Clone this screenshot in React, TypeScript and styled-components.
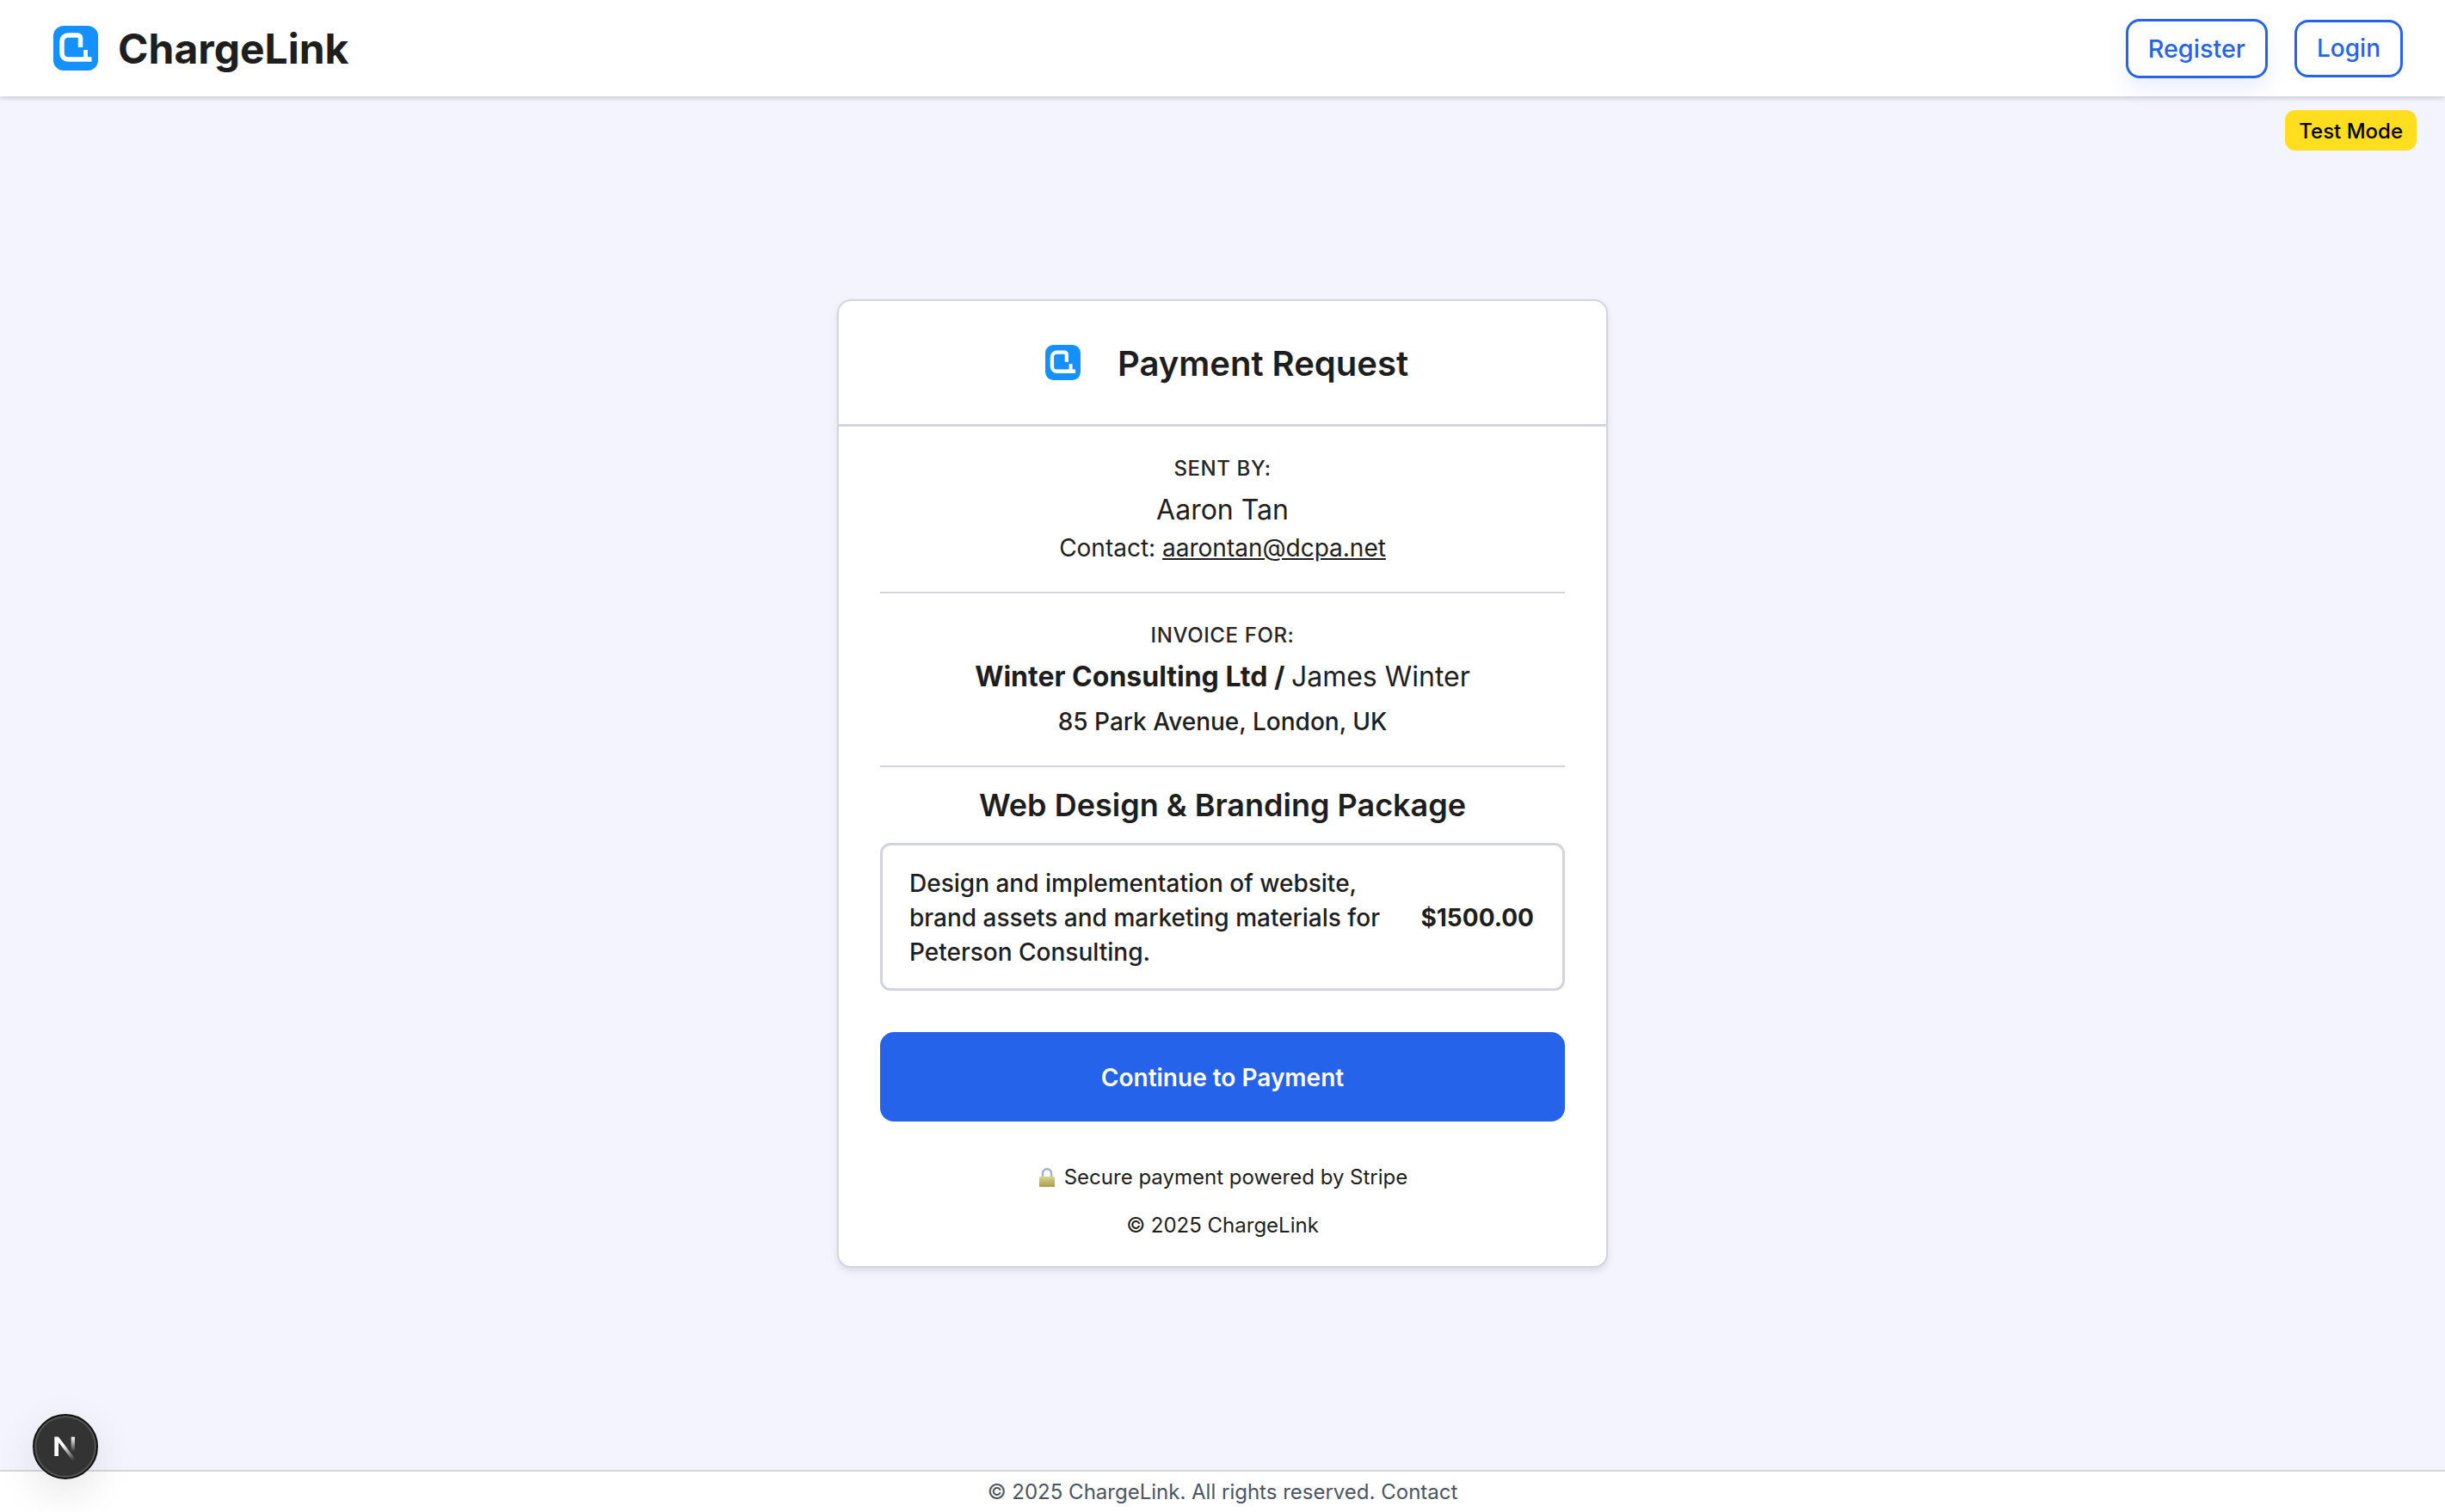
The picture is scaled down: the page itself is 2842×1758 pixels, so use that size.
import React from "react";
import styled, { createGlobalStyle } from "styled-components";

const Global = createGlobalStyle`
  html, body { margin: 0; padding: 0; height: 100%; }
  body { font-family: Inter, "Liberation Sans", sans-serif; color: #171717; background: #f3f4fd; }
  #root { height: 100%; }
  * { box-sizing: border-box; }
`;

const Page = styled.div`
  position: relative;
  height: 1758px;
  display: flex;
  flex-direction: column;
  overflow: hidden;
`;

const Header = styled.header`
  height: 112px;
  flex: none;
  background: #fff;
  display: flex;
  align-items: center;
  justify-content: space-between;
  padding: 0 49px 0 62px;
  box-shadow: 0 2px 6px rgba(0, 0, 0, 0.18);
  position: relative;
`;

const Brand = styled.div`
  display: flex;
  align-items: center;
  gap: 23px;
  font-size: 48px;
  font-weight: 700;
  color: #1e1e1e;
`;

const Nav = styled.nav`
  display: flex;
  align-items: center;
  gap: 31px;
`;

const NavButton = styled.button<{ $hover?: boolean }>`
  font-family: inherit;
  font-size: ${(p) => (p.$hover ? "28.8px" : "28px")};
  font-weight: 500;
  color: #2563eb;
  background: #fff;
  border: 3px solid #2563eb;
  border-radius: 16px;
  height: ${(p) => (p.$hover ? "69px" : "67px")};
  padding: 0 23px;
  ${(p) => p.$hover && "box-shadow: 0 12px 24px rgba(37, 99, 235, 0.1);"}
`;

const TestBadge = styled.div`
  position: absolute;
  top: 128px;
  right: 33px;
  height: 47px;
  padding: 1px 16px 0;
  display: flex;
  align-items: center;
  background: #ffdd1f;
  border-radius: 12px;
  font-size: 24px;
  font-weight: 500;
  color: #000;
`;

const Main = styled.main`
  flex: 1;
  display: flex;
  justify-content: center;
  padding-top: 236px;
`;

const Card = styled.section`
  width: 896px;
  height: 1126px;
  background: #fff;
  border: 2px solid #d4d4dc;
  border-radius: 16px;
  box-shadow: 0 4px 8px rgba(0, 0, 0, 0.1);
  display: flex;
  flex-direction: column;
`;

const CardHead = styled.div`
  height: 146px;
  flex: none;
  display: flex;
  align-items: center;
  justify-content: center;
  gap: 43px;
  padding: 0 0 0 10px;
  border-bottom: 3px solid #d4d4dc;
  font-size: 40px;
  font-weight: 600;
  color: #1e1e1e;
`;

const HeadTitle = styled.span`
  padding-top: 2px;
`;

const CardBody = styled.div`
  padding: 0 48px;
  display: flex;
  flex-direction: column;
  text-align: center;
`;

const Section = styled.div<{ $h: number }>`
  height: ${(p) => p.$h}px;
  padding-top: 31px;
  border-bottom: 2px solid #d4d4dc;
`;

const Label = styled.div`
  font-size: 24px;
  line-height: 36px;
  letter-spacing: 0.6px;
  font-weight: 500;
  color: #262626;
`;

const Name = styled.div`
  font-size: 32px;
  line-height: 48px;
  margin-top: 6px;
  color: #1e1e1e;
`;

const Bold = styled.b`
  font-weight: 700;
`;

const Contact = styled.div`
  font-size: 28px;
  line-height: 40px;
  color: #1e1e1e;
`;

const Mail = styled.a`
  color: inherit;
  text-decoration: underline;
`;

const Address = styled.div`
  font-size: 28px;
  line-height: 40px;
  font-weight: 500;
  margin-top: 8px;
  color: #1e1e1e;
`;

const ItemTitle = styled.h2`
  margin: 20px 0;
  font-size: 36px;
  line-height: 48px;
  font-weight: 600;
  color: #1e1e1e;
`;

const ItemBox = styled.div`
  height: 172px;
  border: 3px solid #d4d4dc;
  border-radius: 12px;
  padding: 2px 33px 0 31px;
  display: flex;
  align-items: center;
  justify-content: space-between;
  text-align: left;
`;

const ItemText = styled.div`
  width: 570px;
  font-size: 28px;
  line-height: 40px;
  font-weight: 500;
  color: #1e1e1e;
`;

const Price = styled.div`
  font-size: 28px;
  font-weight: 700;
  color: #1e1e1e;
`;

const PayButton = styled.button`
  margin-top: 48px;
  height: 104px;
  width: 100%;
  padding: 2px 0 0;
  border: 0;
  border-radius: 16px;
  background: #2563eb;
  color: #fff;
  font-family: inherit;
  font-size: 28px;
  font-weight: 600;
`;

const Secure = styled.div`
  margin-top: 49px;
  padding-left: 2px;
  font-size: 24px;
  line-height: 32px;
  color: #1e1e1e;
  display: flex;
  align-items: center;
  justify-content: center;
  gap: 11px;
`;

const Copy = styled.div`
  margin-top: 24px;
  font-size: 24px;
  line-height: 32px;
  color: #1e1e1e;
`;

const Footer = styled.footer`
  height: 49px;
  flex: none;
  background: #fff;
  border-top: 2px solid #d4d4dc;
  display: flex;
  align-items: center;
  justify-content: center;
  font-size: 24px;
  color: #4b5563;
`;

const DevIndicator = styled.div`
  position: absolute;
  left: 38px;
  top: 1644px;
  width: 76px;
  height: 76px;
  border-radius: 50%;
  background: #333;
  border: 2px solid #111;
  box-shadow: inset 0 0 0 2px #555, 0 16px 48px rgba(0, 0, 0, 0.1);
  display: flex;
  align-items: center;
  justify-content: center;
`;

const Logo = ({ size }: { size: number }) => (
  <svg width={size} height={size} viewBox="0 0 52 52">
    <rect width="52" height="52" rx="12" fill="#1490ff" />
    <path
      d="M31.5 25V14a3 3 0 0 0-3-3H17a7 7 0 0 0-7 7v14a7 7 0 0 0 7 7h27.5"
      fill="none"
      stroke="#fff"
      strokeWidth="5.5"
    />
    <path d="M37.5 28v10" fill="none" stroke="#fff" strokeWidth="5" />
  </svg>
);

const NextMark = () => (
  <svg width="32" height="32" viewBox="0 0 32 32">
    <defs>
      <linearGradient id="nDiag" gradientUnits="userSpaceOnUse" x1="14" y1="14" x2="27" y2="31">
        <stop offset="0" stopColor="#fff" />
        <stop offset="1" stopColor="#fff" stopOpacity="0" />
      </linearGradient>
      <linearGradient id="nBar" x1="0" y1="0" x2="0" y2="1">
        <stop offset="0" stopColor="#fff" />
        <stop offset="0.9" stopColor="#fff" stopOpacity="0" />
      </linearGradient>
    </defs>
    <path d="M3.3 4.7h4.7v22.3H3.3z" fill="#fff" />
    <path d="M3.3 4.7h4.7l20 26-3.4 2z" fill="url(#nDiag)" />
    <path d="M22.7 4.7h4.3v19h-4.3z" fill="url(#nBar)" />
  </svg>
);

const LockEmoji = () => (
  <svg width="18" height="22" viewBox="0 0 18 22">
    <defs>
      <linearGradient id="lockBody" x1="0" y1="0" x2="0" y2="1">
        <stop offset="0" stopColor="#dcd38a" />
        <stop offset="1" stopColor="#a99b4d" />
      </linearGradient>
    </defs>
    <path d="M4 11V6.2a5 5 0 0 1 10 0V11" fill="none" stroke="#9fb3cc" strokeWidth="2.4" />
    <rect x="0" y="10" width="18" height="12" rx="1" fill="url(#lockBody)" />
  </svg>
);

export default function App() {
  return (
    <Page>
      <Global />
      <Header>
        <Brand>
          <Logo size={52} />
          ChargeLink
        </Brand>
        <Nav>
          <NavButton $hover>Register</NavButton>
          <NavButton>Login</NavButton>
        </Nav>
      </Header>
      <TestBadge>Test Mode</TestBadge>
      <Main>
        <Card>
          <CardHead>
            <Logo size={41} />
            <HeadTitle>Payment Request</HeadTitle>
          </CardHead>
          <CardBody>
            <Section $h={194}>
              <Label>SENT BY:</Label>
              <Name>Aaron Tan</Name>
              <Contact>
                Contact: <Mail href="#">aarontan@dcpa.net</Mail>
              </Contact>
            </Section>
            <Section $h={202}>
              <Label>INVOICE FOR:</Label>
              <Name>
                <Bold>Winter Consulting Ltd / </Bold>James Winter
              </Name>
              <Address>85 Park Avenue, London, UK</Address>
            </Section>
            <ItemTitle>Web Design &amp; Branding Package</ItemTitle>
            <ItemBox>
              <ItemText>
                Design and implementation of website, brand assets and marketing materials for Peterson Consulting.
              </ItemText>
              <Price>$1500.00</Price>
            </ItemBox>
            <PayButton>Continue to Payment</PayButton>
            <Secure>
              <LockEmoji />
              Secure payment powered by Stripe
            </Secure>
            <Copy>© 2025 ChargeLink</Copy>
          </CardBody>
        </Card>
      </Main>
      <Footer>© 2025 ChargeLink. All rights reserved. Contact</Footer>
      <DevIndicator>
        <NextMark />
      </DevIndicator>
    </Page>
  );
}
